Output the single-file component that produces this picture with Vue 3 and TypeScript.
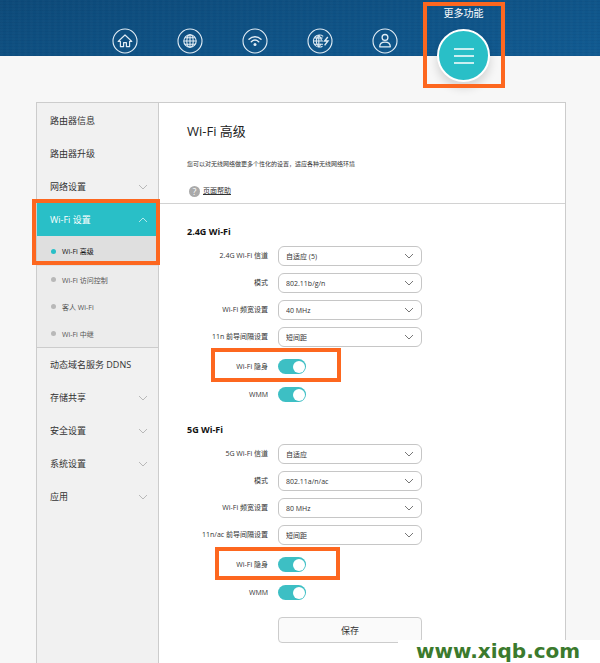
<script setup lang="ts">
import { reactive, ref } from 'vue'

interface MenuItem {
  label: string
  expandable?: boolean
  open?: boolean
  children?: string[]
}

interface SelectField {
  id: string
  label: string
  options: string[]
}

interface SwitchField {
  id: string
  label: string
  marked?: boolean
}

interface Band {
  title: string
  selects: SelectField[]
  switches: SwitchField[]
}

const navIcons = [
  { name: 'home', label: '主页' },
  { name: 'globe', label: '上网' },
  { name: 'wifi', label: 'Wi-Fi' },
  { name: 'speed', label: '加速' },
  { name: 'user', label: '终端' },
]

const menu: MenuItem[] = [
  { label: '路由器信息' },
  { label: '路由器升级' },
  { label: '网络设置', expandable: true },
  {
    label: 'Wi-Fi 设置',
    expandable: true,
    open: true,
    children: ['Wi-Fi 高级', 'Wi-Fi 访问控制', '客人 Wi-Fi', 'Wi-Fi 中继'],
  },
  { label: '动态域名服务 DDNS' },
  { label: '存储共享', expandable: true },
  { label: '安全设置', expandable: true },
  { label: '系统设置', expandable: true },
  { label: '应用', expandable: true },
]

const currentPage = ref('Wi-Fi 高级')

const bands: Band[] = [
  {
    title: '2.4G Wi-Fi',
    selects: [
      { id: 'channel24', label: '2.4G Wi-Fi 信道', options: ['自适应 (5)'] },
      { id: 'mode24', label: '模式', options: ['802.11b/g/n'] },
      { id: 'width24', label: 'Wi-Fi 频宽设置', options: ['40 MHz'] },
      { id: 'guard24', label: '11n 前导间隔设置', options: ['短间距'] },
    ],
    switches: [
      { id: 'hide24', label: 'Wi-Fi 隐身', marked: true },
      { id: 'wmm24', label: 'WMM' },
    ],
  },
  {
    title: '5G Wi-Fi',
    selects: [
      { id: 'channel5', label: '5G Wi-Fi 信道', options: ['自适应'] },
      { id: 'mode5', label: '模式', options: ['802.11a/n/ac'] },
      { id: 'width5', label: 'Wi-Fi 频宽设置', options: ['80 MHz'] },
      { id: 'guard5', label: '11n/ac 前导间隔设置', options: ['短间距'] },
    ],
    switches: [
      { id: 'hide5', label: 'Wi-Fi 隐身', marked: true },
      { id: 'wmm5', label: 'WMM' },
    ],
  },
]

const chosen = reactive<Record<string, string>>({})
const enabled = reactive<Record<string, boolean>>({})
for (const band of bands) {
  for (const field of band.selects) chosen[field.id] = field.options[0]
  for (const field of band.switches) enabled[field.id] = true
}
</script>

<template>
  <div class="page">
    <header class="topbar">
      <nav class="nav">
        <button v-for="icon in navIcons" :key="icon.name" class="nav-button" type="button" :aria-label="icon.label">
          <svg viewBox="0 0 26 26" width="26" height="26" fill="none" stroke="currentColor">
            <circle cx="13" cy="13" r="12" stroke-width="1.1" />
            <g v-if="icon.name === 'home'" stroke-width="1.2" stroke-linejoin="round">
              <path d="M6.2 13.4 13 7l6.800 6.400h-2.200v5.200h-3.200v-4h-2.800v4H8.400v-5.200z" />
            </g>
            <g v-else-if="icon.name === 'globe'" stroke-width="1.100">
              <circle cx="13" cy="13" r="6.200" />
              <ellipse cx="13" cy="13" rx="3.200" ry="6.200" />
              <path d="M13 6.800v12.400M6.800 13h12.400M8 9.800h10M8 16.200h10" />
            </g>
            <g v-else-if="icon.name === 'wifi'" stroke-width="1.400" stroke-linecap="round">
              <path d="M7 11.200c3.400-3.200 8.600-3.200 12 0M9.300 13.700c2.200-1.900 5.200-1.900 7.400 0" />
              <circle cx="13" cy="16.600" r="1.500" fill="currentColor" stroke="none" />
            </g>
            <g v-else-if="icon.name === 'speed'" stroke-width="1.100">
              <path d="M16.200 8.400A6 6 0 1 0 15.500 18.200M11.800 7.300v11.600M6 13h10M7.200 10h8.400M7.200 16.200h8.800" />
              <path d="M11.800 7.300c-3.400 3-3.400 8.600 0 11.600M11.800 7.300c1.600 1.400 2.500 3.200 2.600 5.200M11.800 18.900c1-.9 1.700-1.900 2.100-3" />
              <path d="M20.800 9 17.600 13h3.400l-3.400 4.400" stroke-width="1.400" />
            </g>
            <g v-else stroke-width="1.300" stroke-linejoin="round">
              <circle cx="13" cy="9.400" r="2.900" />
              <path d="M7.700 18.800c0-3.400 2.200-4.700 5.300-4.700s5.300 1.300 5.300 4.700z" />
            </g>
          </svg>
        </button>
        <div class="more">
          <span id="more-label" class="more-label">更多功能</span>
          <button class="more-button" type="button" aria-labelledby="more-label">
            <svg viewBox="0 0 20 16" width="20" height="16" stroke="currentColor" stroke-width="1.600">
              <path d="M0 1h20M0 8h20M0 15h20" />
            </svg>
          </button>
          <span class="mark mark-more"></span>
        </div>
      </nav>
    </header>

    <div class="panel">
      <aside class="sidebar">
        <div v-for="item in menu" :key="item.label" class="group" :class="{ open: item.open }">
          <a class="item" href="#">
            <span>{{ item.label }}</span>
            <svg v-if="item.expandable" class="chevron" viewBox="0 0 10 6" width="10" height="6" fill="none" stroke="currentColor">
              <path :d="item.open ? 'M1 5l4-4 4 4' : 'M1 1l4 4 4-4'" />
            </svg>
          </a>
          <div v-if="item.children" class="children">
            <a
              v-for="child in item.children"
              :key="child"
              class="child"
              :class="{ current: child === currentPage }"
              href="#"
              @click.prevent="currentPage = child"
            >{{ child }}</a>
          </div>
          <span v-if="item.open" class="mark mark-menu"></span>
        </div>
      </aside>

      <main class="content">
        <div class="intro">
          <h1>Wi-Fi 高级</h1>
          <p>您可以对无线网络做更多个性化的设置，适应各种无线网络环境</p>
          <a class="help" href="#"><span class="help-icon">?</span><span class="help-text">页面帮助</span></a>
        </div>

        <form class="form" @submit.prevent>
          <section v-for="band in bands" :key="band.title" class="band">
            <h2>{{ band.title }}</h2>
            <div class="rows">
              <div v-for="field in band.selects" :key="field.id" class="row">
                <label :for="field.id">{{ field.label }}</label>
                <span class="select-box">
                  <select :id="field.id" v-model="chosen[field.id]">
                    <option v-for="option in field.options" :key="option">{{ option }}</option>
                  </select>
                  <svg class="select-arrow" viewBox="0 0 10 6" width="10" height="6" fill="none" stroke="currentColor">
                    <path d="M1 1l4 4 4-4" />
                  </svg>
                </span>
              </div>
            </div>
            <div class="rows switches">
              <div v-for="field in band.switches" :key="field.id" class="row">
                <label :for="field.id">{{ field.label }}</label>
                <input :id="field.id" v-model="enabled[field.id]" class="switch" type="checkbox" />
                <span v-if="field.marked" class="mark mark-row"></span>
              </div>
            </div>
          </section>
          <div class="row actions">
            <span></span>
            <button class="save" type="submit">保存</button>
          </div>
        </form>
      </main>
    </div>

    <div class="watermark">www.xiqb.com</div>
  </div>
</template>

<style>
body {
  margin: 0;
  background: #f7f7f7;
}
</style>

<style scoped>
.page {
  position: relative;
  display: flex;
  flex-direction: column;
  min-height: 100vh;
  overflow: hidden;
  color: #333;
  font-family: "Open Sans", "Noto Sans CJK SC", sans-serif;
  font-size: 9px;
}

.page * {
  box-sizing: border-box;
}

a {
  color: inherit;
  text-decoration: none;
}

button,
select {
  font-family: inherit;
  color: inherit;
}

.mark {
  position: absolute;
  border: 4px solid #fd671f;
  pointer-events: none;
}

.topbar {
  height: 56px;
  background:
    repeating-linear-gradient(90deg, rgba(255, 255, 255, 0.012) 0 3px, transparent 3px 6px),
    repeating-linear-gradient(0deg, rgba(0, 20, 60, 0.05) 0 1px, transparent 1px 3px),
    linear-gradient(170deg, #0d4a79, #115b92);
}

.nav {
  display: flex;
  justify-content: center;
  gap: 39px;
  padding-left: 2px;
}

.nav-button {
  width: 26px;
  height: 26px;
  margin-top: 28px;
  padding: 0;
  border: 0;
  background: none;
  color: #e2edf5;
}

.nav-button svg {
  display: block;
}

.more {
  position: relative;
  display: flex;
  flex-direction: column;
  align-items: center;
  width: 53px;
  padding-top: 5px;
}

.more-label {
  height: 24px;
  color: #fff;
  font-size: 10px;
  line-height: 16px;
}

.more-button {
  display: flex;
  align-items: center;
  justify-content: center;
  flex: none;
  width: 53px;
  height: 53px;
  padding: 0;
  border: 2px solid #fff;
  border-radius: 50%;
  background: #29bfc7;
  box-shadow: 0 6px 10px rgba(0, 0, 0, 0.14);
  color: #fff;
}

.mark-more {
  top: 2px;
  right: -15px;
  left: -14px;
  height: 86px;
}

.panel {
  display: flex;
  flex: 1;
  margin: 46px 34px 0 36px;
  border: solid #ccc;
  border-width: 1px 1px 0;
  background: #fff;
}

.sidebar {
  flex: none;
  width: 122px;
  padding-top: 1px;
  border-right: 1px solid #ccc;
  background: #f1f1f1;
}

.group {
  position: relative;
}

.item {
  display: flex;
  align-items: center;
  justify-content: space-between;
  height: 33px;
  padding: 0 10px 0 13px;
}

.chevron {
  color: #b8b8b8;
}

.open .item {
  background: #29bfc7;
  color: #fff;
}

.open .chevron {
  color: #b5e8eb;
}

.children {
  border-bottom: 1px solid #ccc;
  background: #ececec;
  color: #555;
  font-size: 7px;
}

.child {
  display: flex;
  align-items: center;
  gap: 6px;
  height: 27px;
  padding-left: 14px;
}

.child::before {
  width: 5px;
  height: 5px;
  border-radius: 50%;
  background: #b8b8b8;
  content: "";
}

.child.current {
  height: 30px;
  background: #dfdfdf;
  color: #111;
}

.child.current::before {
  background: #29bfc7;
}

.mark-menu {
  top: -4px;
  right: -2px;
  left: -5px;
  height: 66px;
}

.content {
  flex: 1;
  min-width: 0;
}

.intro {
  height: 101px;
  padding: 18px 28px 0;
  border-bottom: 1px solid #d2d2d2;
}

h1 {
  margin: 0;
  color: #222;
  font-size: 13px;
  font-weight: 400;
  line-height: 20px;
}

p {
  margin: 18px 0 0;
  font-size: 6px;
  line-height: 10px;
}

.help {
  display: inline-flex;
  align-items: center;
  gap: 3px;
  margin-top: 16px;
  padding-left: 2px;
  font-size: 7px;
  line-height: 12px;
}

.help-text {
  text-decoration: underline;
}

.help-icon {
  width: 11px;
  height: 11px;
  border-radius: 50%;
  background: #aaa;
  color: #fff;
  font-size: 9px;
  line-height: 11px;
  text-align: center;
}

.form {
  padding: 20px 28px;
}

.band + .band {
  margin-top: 17px;
}

h2 {
  margin: 0 0 6px;
  color: #111;
  font-size: 9px;
  font-weight: 700;
  line-height: 16px;
}

.rows {
  display: grid;
  gap: 7px;
}

.row {
  position: relative;
  display: grid;
  grid-template-columns: 81px minmax(0, 144px);
  align-items: center;
  column-gap: 10px;
}

.row label {
  font-size: 7px;
  line-height: 10px;
  text-align: right;
  white-space: nowrap;
}

.select-box {
  position: relative;
  display: flex;
}

select {
  width: 100%;
  height: 20px;
  padding: 0 22px 0 7px;
  border: 1px solid #c6c6c6;
  border-radius: 6px;
  appearance: none;
  background: #fff;
  font-size: 7px;
}

.select-arrow {
  position: absolute;
  top: 7px;
  right: 8px;
  color: #777;
  pointer-events: none;
}

.switches {
  margin-top: 9px;
}

.switches .row {
  height: 21px;
}

.switch {
  display: flex;
  align-items: center;
  width: 28px;
  height: 15px;
  margin: 0;
  padding: 0 1px;
  border-radius: 8px;
  appearance: none;
  background: #bbb;
}

.switch::before {
  width: 12px;
  height: 12px;
  border-radius: 50%;
  background: #fff;
  content: "";
}

.switch:checked {
  justify-content: flex-end;
  background: #3dbfc4;
}

.mark-row {
  top: -8px;
  bottom: -5px;
  left: 24px;
  width: 130px;
}

.band + .band .mark-row {
  top: -7px;
  left: 28px;
  width: 125px;
}

.actions {
  margin-top: 14px;
}

.save {
  height: 26px;
  padding: 0;
  border: 1px solid #ccc;
  border-radius: 4px;
  background: #fafafa;
  font-size: 9px;
}

.watermark {
  position: absolute;
  right: 0;
  bottom: 0;
  width: 202px;
  height: 23px;
  padding-left: 18px;
  box-sizing: border-box;
  background: #fff;
  color: #3b7a2d;
  font-family: "DejaVu Sans", sans-serif;
  font-size: 20px;
  font-weight: 700;
  line-height: 22px;
}
</style>
